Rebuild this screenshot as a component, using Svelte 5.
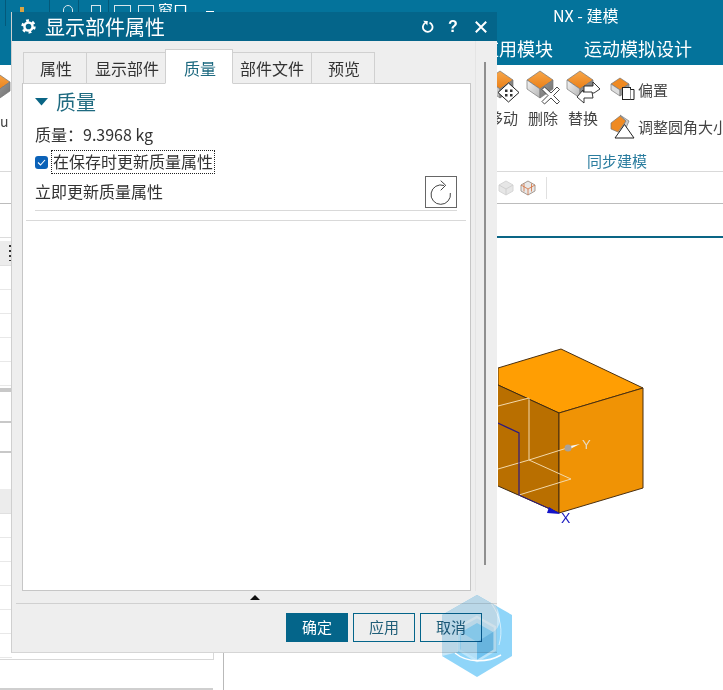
<script>
  const tabs = ['属性', '显示部件', '质量', '部件文件', '预览'];
  const active = '质量';
  const rows = [0, 1, 2, 3, 4];
  const rows2 = [0, 1, 2, 3, 4, 5];
</script>

{#snippet cube()}
  <defs>
    <linearGradient id="lf" x1="0" y1="0" x2="1" y2="1"><stop offset="0" stop-color="#f4f4f4"/><stop offset="1" stop-color="#b5b5b5"/></linearGradient>
    <linearGradient id="rf" x1="0" y1="0" x2="1" y2="1"><stop offset="0" stop-color="#9a9a9a"/><stop offset="1" stop-color="#6f6f6f"/></linearGradient>
    <linearGradient id="tf" x1="0" y1="0" x2="0" y2="1"><stop offset="0" stop-color="#f7a64a"/><stop offset="1" stop-color="#ea7f16"/></linearGradient>
  </defs>
  <path d="M4 10 17 1l13 9-13 9z" fill="url(#tf)" stroke="#777" stroke-width=".7"/>
  <path d="M4 10l13 9v9L4 19z" fill="url(#lf)" stroke="#777" stroke-width=".7"/>
  <path d="M17 19l13-9v9l-13 9z" fill="url(#rf)" stroke="#777" stroke-width=".7"/>
{/snippet}

<div class="desktop">
  <header class="appbar">
    <div class="quick">
      <span class="sep"></span>
      <span class="qdot"></span>
      <span class="sep s2"></span>
      <span class="qi i1"></span>
      <span class="sep s3"></span>
      <span class="qi i2"></span>
      <span class="sep s4"></span>
      <span class="qi i3"></span>
      <span class="qi i4"></span>
      <span class="qtext">窗口</span>
      <span class="qdash"></span>
    </div>
    <div class="title">NX - 建模</div>
    <nav class="menu"><span>应用模块</span><span>运动模拟设计</span></nav>
  </header>

  <section class="ribbon">
    <div class="edge">
      <svg width="12" height="30" viewBox="20 0 12 30">{@render cube()}</svg>
      <span>u</span>
    </div>
    <div class="tools">
      <figure class="tool">
        <svg width="40" height="38" viewBox="0 0 40 38">
          {@render cube()}
          <path d="M25.500 13 36 22.500 25.500 32 15 22.500z" fill="#fff" stroke="#222"/>
          <path d="M22 19.500h2.500V22H22zM27 19.500h2.500V22H27zM22 24h2.500v2.500H22zM27 24h2.500v2.500H27z" fill="#333"/>
        </svg>
        <figcaption>移动</figcaption>
      </figure>
      <figure class="tool">
        <svg width="40" height="38" viewBox="0 0 40 38">
          {@render cube()}
          <path d="M19 19.500l2.500-2.500 6.500 6 6-6 2.500 2.500-6 6 6 6-2.500 2.500-6-6-6.500 6-2.500-2.500 6-6z" fill="#fff" stroke="#333" stroke-width=".9"/>
        </svg>
        <figcaption>删除</figcaption>
      </figure>
      <figure class="tool">
        <svg width="40" height="38" viewBox="0 0 40 38">
          {@render cube()}
          <path d="M21 16h9v-4l7 7-6 4h-10z" fill="#fff" stroke="#222" stroke-width=".9"/>
          <path d="M29 22H20v-2l-6 7 7 6v-5h9z" fill="#fff" stroke="#222" stroke-width=".9"/>
        </svg>
        <figcaption>替换</figcaption>
      </figure>
      <div class="stack">
        <div class="small">
          <svg width="25" height="24" viewBox="0 0 25 24">
            <path d="M1 7 10 1l9 6-9 6z" fill="#ef8a22" stroke="#777" stroke-width=".7"/>
            <path d="M1 7l9 6v6l-9-6z" fill="#ddd" stroke="#777" stroke-width=".7"/>
            <path d="M10 13l9-6v6l-9 6z" fill="#999" stroke="#777" stroke-width=".7"/>
            <rect x="12.500" y="10.500" width="8" height="12" fill="#fff" stroke="#222"/>
            <path d="M20.500 12.500h3.500v10h-3.500" fill="#fff" stroke="#222"/>
          </svg>
          <span>偏置</span>
        </div>
        <div class="small">
          <svg width="25" height="26" viewBox="0 0 25 26">
            <path d="M1 10 10 3l6 5-8 11-7-3z" fill="#ef8a22" stroke="#777" stroke-width=".7"/>
            <path d="M10 2l9 6-3 7-7 5 7-12z" fill="#ccc" stroke="#777" stroke-width=".7"/>
            <path d="M14.500 11.500 24 25H5z" fill="#fff" stroke="#222"/>
          </svg>
          <span>调整圆角大小</span>
        </div>
      </div>
    </div>
    <div class="group">同步建模</div>
  </section>

  <div class="minibar">
    <svg width="16" height="16" viewBox="0 0 16 16">
      <path d="M1 5 8 1l7 4v6l-7 4-7-4z" fill="#e6e6e6" stroke="#d6d6d6"/>
      <path d="M1 5l7 4 7-4M8 9v6" fill="none" stroke="#d0d0d0"/>
    </svg>
    <svg width="16" height="16" viewBox="0 0 16 16">
      <path d="M1 5 8 1l7 4v6l-7 4-7-4z" fill="#e8e8e8" stroke="#a59a92"/>
      <path d="M4 3.500v8M1 5l7 4 7-4M8 9v6M11.500 3.500v8" fill="none" stroke="#d4703c" stroke-width=".8"/>
    </svg>
    <span class="minisep"></span>
  </div>
  <div class="viewline"></div>

  <svg class="model" width="160" height="190" viewBox="0 0 160 190">
    <path d="M0 28 63 9l82 39-84 25L0 45z" fill="#ff9e03" stroke="#4a2f10"/>
    <path d="M0 45l61 28v100L0 146z" fill="#b96f00"/>
    <path d="M0 45l61 28v100L0 146" fill="none" stroke="#3d2a12"/>
    <path d="M61 73l84-25v100l-84 25z" fill="#f09305" stroke="#4a2f10"/>
    <path d="M0 66l31-8v62L0 129M31 120l42 19-52 16M31 120l38-12" fill="none" stroke="#f3d9ab"/>
    <path d="M0 83l21 10v62" fill="none" stroke="#2d1a80" stroke-width="1.200"/>
    <path d="M21 155l40 18" fill="none" stroke="#2d1a80"/>
    <path d="M51 167l11 7-13-1z" fill="#1414c8"/>
    <path d="M72 106l10-2-10 5z" fill="#f5f5f5"/>
    <circle cx="70" cy="108" r="3.500" fill="#a9a29a"/>
    <text x="84" y="109" class="axis-y">Y</text>
    <text x="63" y="183" class="axis-x">X</text>
  </svg>

  <div class="sidepanel">
    <div class="grid g1">
      <div class="ghead"><i></i></div>
      {#each rows as r (r)}<div class="grow"></div>{/each}
    </div>
    <div class="divider d1"></div>
    <div class="divider d2"></div>
    <div class="divider d3"></div>
    <div class="grid g2">
      <div class="ghead"></div>
      {#each rows2 as r (r)}<div class="grow"></div>{/each}
    </div>
  </div>
  <div class="lower">
    <div class="lower-box"></div>
    <div class="lower-bar"></div>
  </div>

  <div class="dialog">
    <div class="dtitle">
      <svg class="gear" width="15" height="15" viewBox="0 0 24 24">
        <circle cx="12" cy="12" r="6.500" fill="none" stroke="#fff" stroke-width="4"/>
        <circle cx="12" cy="12" r="9.500" fill="none" stroke="#fff" stroke-width="4" stroke-dasharray="4.500 5.450"/>
      </svg>
      <span class="dname">显示部件属性</span>
      <div class="actions">
        <svg class="a-rot" width="12" height="13" viewBox="0 0 12 13">
          <path d="M3.500 2.800A4.800 4.800 0 1 0 7.500 2.600" fill="none" stroke="#fff" stroke-width="1.800"/>
          <path d="M1.200 .8 5.800 1l-.4 4.400z" fill="#fff"/>
        </svg>
        <span class="help">?</span>
        <svg class="a-x" width="12" height="12" viewBox="0 0 12 12">
          <path d="M.8.800l10.400 10.400M11.200.800.800 11.200" stroke="#fff" stroke-width="2"/>
        </svg>
      </div>
    </div>

    <div class="dbody">
      <div class="col">
        <div class="tabs">
          {#each tabs as t (t)}
            <button class="tab" class:on={t === active}>{t}</button>
          {/each}
        </div>
        <div class="pane">
          <div class="section">
            <svg width="13" height="8" viewBox="0 0 13 8"><path d="M0 0h13L6.500 7.500z" fill="#0a6585"/></svg>
            <span>质量</span>
          </div>
          <div class="mass">质量：9.3968 kg</div>
          <label class="check">
            <span class="box">
              <svg width="9" height="9" viewBox="0 0 9 9"><path d="M1 4.500 3.500 7 8 2" fill="none" stroke="#fff" stroke-width="1.100"/></svg>
            </span>
            <span class="focus">在保存时更新质量属性</span>
          </label>
          <div class="update">
            <span class="utext">立即更新质量属性</span>
            <button class="refresh" aria-label="立即更新">
              <svg width="30" height="30" viewBox="0 0 30 30">
                <path d="M18 8.500A9.700 9.700 0 1 0 24.300 16" fill="none" stroke="#444"/>
                <path d="M14.700 3.700 19.700 8.300 14.700 13.300" fill="none" stroke="#444"/>
              </svg>
            </button>
          </div>
          <div class="rule"></div>
        </div>
      </div>
      <div class="scroll"><i></i></div>
    </div>

    <div class="collapse"><i></i></div>
    <footer class="foot">
      <button class="btn primary">确定</button>
      <button class="btn">应用</button>
      <button class="btn">取消</button>
    </footer>
  </div>

  <svg class="mark" width="72" height="82" viewBox="0 0 72 82">
    <path d="M36 0 71 20v41L36 82 1 61V20z" fill="#8fd5f9"/>
    <path d="M36 0 55 11C61 22 60 32 52 37L36 28 17 39V57L1 61V20z" fill="#c8e7f8"/>
    <path d="M36 47 52 37v18L36 65z" fill="#6fc1ee"/>
    <path d="M36 47 20 37v18l16 10z" fill="#b3dff7"/>
    <path d="M36 22 54 32v23L36 66 18 55V32z" fill="none" stroke="#fff" stroke-width="2.500" opacity=".4"/>
    <path d="M14 58c12 10 32 10 46 2" fill="none" stroke="#fff" stroke-width="1.500"/>
    <path d="M50 8c10 14 12 28 8 42" fill="none" stroke="#fff" stroke-width="1" opacity=".6"/>
  </svg>
</div>

<style>
  :global(body) {
    margin: 0;
    background: #fff;
  }
  .desktop {
    position: relative;
    width: 723px;
    height: 690px;
    overflow: hidden;
    background: #fff;
    font-family: "Noto Sans CJK SC", "Noto Sans", sans-serif;
    color: #333;
  }
  .appbar {
    height: 65px;
    background: #04739b;
    position: relative;
    color: #fff;
    overflow: hidden;
  }
  .quick {
    display: flex;
    align-items: flex-start;
    padding: 0 0 0 5px;
  }
  .sep { width: 1px; height: 26px; background: #04597a; flex: none; }
  .s2 { margin-left: 25px; }
  .s3 { margin-left: 5px; }
  .s4 { margin-left: 7px; }
  .qdot { width: 4px; height: 6px; margin: 7px 0 0 14px; background: #d9a544; flex: none; }
  .qi {
    display: block;
    flex: none;
    height: 10px;
    margin-top: 5px;
    border: 1px solid #d8e6ec;
    box-sizing: border-box;
  }
  .i1 { width: 10px; margin-left: 13px; border-radius: 5px 5px 0 0; }
  .i2 { width: 10px; margin-left: 12px; }
  .i3 { width: 17px; margin-left: 5px; }
  .i4 { width: 16px; margin-left: 7px; }
  .qtext { font-size: 15px; line-height: 20px; margin: 0 0 0 4px; flex: none; }
  .qdash { width: 8px; height: 1px; background: #fff; margin: 11px 0 0 18px; }
  .title {
    position: absolute;
    left: 553px;
    top: 4px;
    font-size: 16px;
    line-height: 22px;
    white-space: nowrap;
  }
  .menu {
    position: absolute;
    left: 481px;
    top: 35px;
    display: flex;
    gap: 31px;
    font-size: 18px;
    line-height: 26px;
    white-space: nowrap;
  }
  .ribbon {
    height: 107px;
    border-bottom: 1px solid #d9d9d9;
    position: relative;
    box-sizing: border-box;
    background: #fff;
  }
  .edge {
    position: absolute;
    left: 0;
    top: 7px;
    width: 12px;
    overflow: hidden;
    font-size: 14px;
    line-height: 18px;
    color: #444;
  }
  .edge svg { display: block; }
  .edge span { display: block; margin-top: 10px; }
  .tools {
    display: flex;
    position: absolute;
    left: 483px;
    top: 5px;
    white-space: nowrap;
  }
  .tool {
    margin: 0;
    width: 40px;
    display: flex;
    flex-direction: column;
    align-items: center;
    font-size: 15px;
    line-height: 20px;
    color: #444;
  }
  .tool svg { display: block; }
  .stack {
    display: flex;
    flex-direction: column;
    margin: 2px 0 0 7px;
    gap: 3px;
  }
  .small {
    display: flex;
    align-items: center;
    gap: 3px;
    font-size: 15px;
    color: #444;
    height: 34px;
  }
  .group {
    position: absolute;
    left: 587px;
    top: 86px;
    color: #2b7d9f;
    font-size: 15px;
    line-height: 20px;
  }
  .minibar {
    height: 32px;
    padding-left: 498px;
    display: flex;
    align-items: center;
    gap: 6px;
    border-bottom: 1px solid #bcbcbc;
    box-sizing: border-box;
  }
  .minisep { width: 1px; height: 22px; background: #e0e0e0; margin-left: 4px; }
  .viewline {
    margin: 32px 0 0 497px;
    height: 2px;
    background: #0a6585;
  }
  .model {
    position: absolute;
    left: 498px;
    top: 340px;
  }
  .axis-y { font: 13px "Liberation Sans", sans-serif; fill: #e6dac4; }
  .axis-x { font: 14px "Liberation Sans", sans-serif; fill: #1a1ac0; }
  .sidepanel {
    position: absolute;
    left: 0;
    top: 237px;
    width: 12px;
    bottom: 0;
    border-top: 1px solid #dcdcdc;
  }
  .grid { position: absolute; left: 0; width: 12px; }
  .g1 { top: 3px; }
  .g2 { top: 251px; }
  .ghead {
    height: 24px;
    background: #ececec;
    border-bottom: 1px solid #e0e0e0;
    position: relative;
  }
  .ghead i {
    position: absolute;
    left: 9px;
    top: 4px;
    width: 2px;
    height: 16px;
    background: repeating-linear-gradient(#333 0 2px, transparent 2px 5px);
  }
  .grow {
    height: 23px;
    border-bottom: 1px solid #e8e8e8;
  }
  .divider { position: absolute; left: 0; width: 12px; height: 2px; background: #c8c8c8; }
  .d1 { top: 150px; height: 4px; }
  .d2 { top: 183px; }
  .d3 { top: 213px; }
  .lower {
    position: absolute;
    left: 0;
    top: 653px;
    width: 223px;
    height: 37px;
    border-right: 1px solid #b9b9b9;
  }
  .lower-box {
    width: 213px;
    height: 6px;
    border-right: 1px solid #d8d8d8;
    border-bottom: 1px solid #d8d8d8;
  }
  .lower-bar {
    position: absolute;
    left: 0;
    bottom: 0;
    width: 213px;
    height: 2px;
    background: #cfcfcf;
  }
  .dialog {
    position: absolute;
    left: 11px;
    top: 12px;
    width: 486px;
    height: 641px;
    display: flex;
    flex-direction: column;
    background: #eeeeee;
    border-left: 1px solid #cfcfcf;
    border-bottom: 1px solid #d5d5d5;
    box-sizing: border-box;
  }
  .dtitle {
    height: 29px;
    flex: none;
    background: #04658a;
    color: #fff;
    display: flex;
    align-items: center;
    padding: 0 10px 0 9px;
  }
  .gear { margin-right: 9px; flex: none; }
  .dname { font-size: 20px; line-height: 28px; }
  .actions {
    margin-left: auto;
    display: flex;
    align-items: center;
  }
  .help { font: bold 16px/16px "Liberation Sans", sans-serif; margin-left: 14px; width: 10px; }
  .a-x { margin-left: 17px; }
  .dbody {
    flex: 1;
    display: flex;
    min-height: 0;
    padding: 8px 0 0 10px;
  }
  .col {
    width: 449px;
    display: flex;
    flex-direction: column;
    flex: none;
  }
  .tabs {
    display: flex;
    height: 35px;
    flex: none;
    align-items: flex-end;
    padding-left: 1px;
    position: relative;
    z-index: 1;
    margin-bottom: -1px;
  }
  .tab {
    font: inherit;
    font-size: 16px;
    line-height: 20px;
    color: #333;
    background: #efefef;
    border: 1px solid #d0d0d0;
    height: 32px;
    padding: 0 6px 1px 8px;
    margin: 0 -1px 0 0;
    box-sizing: border-box;
    white-space: nowrap;
    flex: none;
  }
  .tab:first-child, .tab:last-child { padding: 0 14px 1px 16px; }
  .tab:nth-child(4) { padding: 0 7px 1px; }
  .tab.on {
    background: #fff;
    color: #1e6a80;
    height: 35px;
    border-bottom-color: #fff;
    padding: 2px 16px 0 18px;
    position: relative;
    z-index: 1;
  }
  .pane {
    flex: 1;
    background: #fff;
    border: 1px solid #c6c6c6;
    box-sizing: border-box;
    padding: 0 3px;
    color: #333;
    min-height: 0;
  }
  .section {
    display: flex;
    align-items: center;
    gap: 8px;
    height: 35px;
    padding-left: 9px;
    color: #1e6a80;
    font-size: 20px;
  }
  .mass {
    padding-left: 9px;
    font-size: 16px;
    line-height: 20px;
    margin-top: 5px;
  }
  .check {
    display: flex;
    align-items: center;
    margin: 6px 0 0 9px;
    height: 24px;
  }
  .box {
    width: 13px;
    height: 13px;
    border-radius: 3px;
    background: #0b62b8;
    display: flex;
    align-items: center;
    justify-content: center;
    margin-right: 3px;
    flex: none;
  }
  .focus {
    font-size: 16px;
    line-height: 20px;
    border: 1px dotted #222;
    padding: 0 1px 2px;
    white-space: nowrap;
  }
  .update {
    display: flex;
    align-items: center;
    justify-content: space-between;
    margin: 0 10px 0 9px;
    height: 37px;
    box-sizing: border-box;
    font-size: 16px;
    border-bottom: 1px solid #d9d9d9;
  }
  .utext { padding-bottom: 2px; }
  .refresh {
    width: 32px;
    height: 32px;
    padding: 0;
    border: 1px solid #666;
    background: #fff;
    display: flex;
    align-items: center;
    justify-content: center;
    flex: none;
    box-sizing: border-box;
  }
  .rule {
    height: 1px;
    background: #d9d9d9;
    margin: 9px 1px 0 0;
  }
  .scroll {
    flex: 1;
    position: relative;
    margin: -8px 0 0 4px;
    border-left: 1px solid #e4e4e4;
  }
  .scroll i {
    position: absolute;
    left: 8px;
    top: 21px;
    bottom: 26px;
    width: 2px;
    background: #8f8f8f;
  }
  .collapse {
    height: 13px;
    flex: none;
    box-sizing: border-box;
    margin-left: 4px;
    padding-right: 4px;
    display: flex;
    justify-content: center;
    align-items: center;
    border-bottom: 1px solid #d0d0d0;
  }
  .collapse i {
    width: 0;
    height: 0;
    border: 5px solid transparent;
    border-top: 0;
    border-bottom: 5px solid #111;
  }
  .foot {
    height: 48px;
    flex: none;
    display: flex;
    justify-content: flex-end;
    gap: 5px;
    padding: 9px 15px 0 0;
    box-sizing: border-box;
    align-items: flex-start;
  }
  .btn {
    font: inherit;
    width: 62px;
    height: 29px;
    padding: 0 0 2px;
    font-size: 15px;
    line-height: 20px;
    background: transparent;
    border: 1px solid #04658a;
    color: #1f5e78;
  }
  .btn.primary {
    background: #04658a;
    color: #fff;
  }
  .mark {
    position: absolute;
    left: 441px;
    top: 595px;
    mix-blend-mode: multiply;
  }
</style>
